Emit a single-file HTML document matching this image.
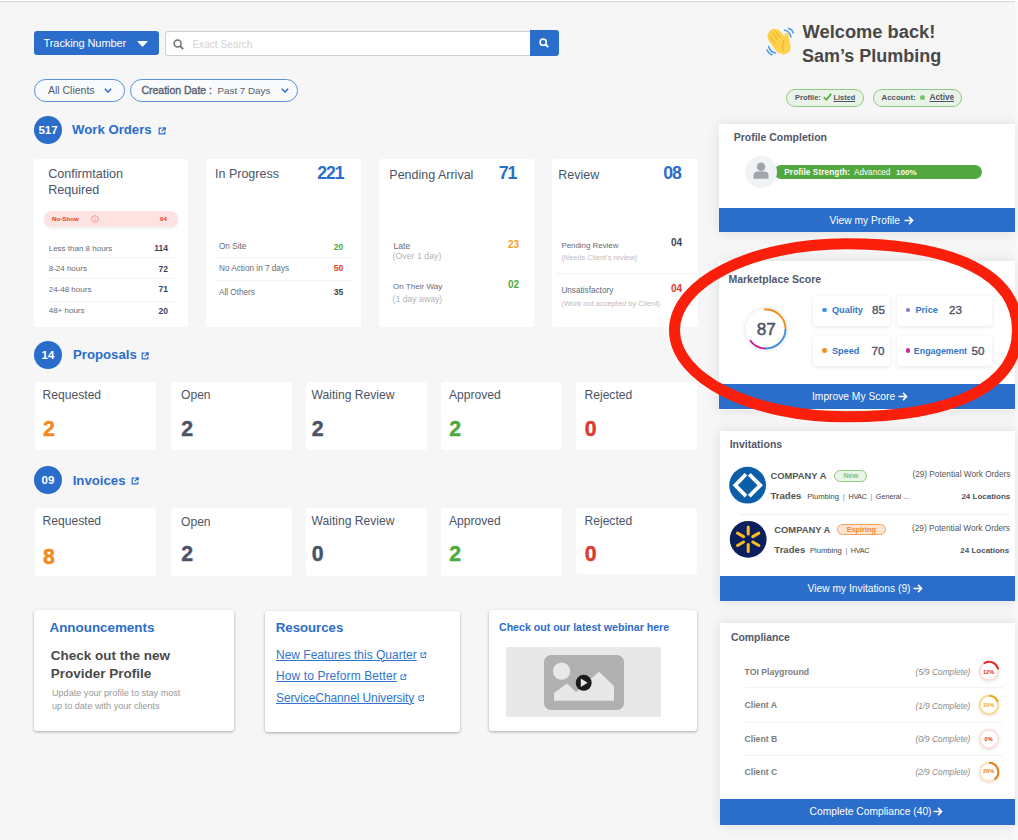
<!DOCTYPE html>
<html><head><meta charset="utf-8"><style>
html,body{margin:0;padding:0;}
body{width:1018px;height:840px;overflow:hidden;position:relative;background:#f6f6f6;font-family:"Liberation Sans",sans-serif;}
.t{position:absolute;line-height:1;white-space:nowrap;}
.r{position:absolute;}
</style></head><body>
<div class="r" style="left:0;top:0;width:1018px;height:1px;background:#fff"></div>
<div class="r" style="left:0;top:1px;width:1015px;height:1px;background:#d9d9d9"></div>
<div class="r" style="left:0;top:2px;width:1015px;height:1px;background:#f1f1f1"></div>
<div class="r" style="left:1015px;top:1px;width:3px;height:839px;background:#f9f9f9"></div>
<div class="r" style="left:34px;top:31px;width:125px;height:24px;background:#2b6dcb;border-radius:3px;"></div>
<div class="t" style="left:43.6px;top:37.89px;font-size:11px;color:#fff;font-weight:normal;letter-spacing:-0.1px;">Tracking Number</div>
<svg class="r" style="left:137px;top:41px" width="11" height="6" viewBox="0 0 11 6"><path d="M0 0H11L5.5 6Z" fill="#fff"/></svg>
<div class="r" style="left:164.5px;top:30.5px;width:366px;height:25px;background:#fff;border:1px solid #cfcfcf;border-right:none;border-radius:3px 0 0 3px;box-sizing:border-box;"></div>
<svg class="r" style="left:172.8px;top:38.8px" width="11" height="11" viewBox="0 0 11 11"><circle cx="4.6" cy="4.6" r="3.5" fill="none" stroke="#707070" stroke-width="1.5"/><path d="M7.2 7.2L10.2 10.2" stroke="#707070" stroke-width="1.8"/></svg>
<div class="t" style="left:192.4px;top:40.05px;font-size:10.1px;color:#d2d2d2;font-weight:normal;">Exact Search</div>
<div class="r" style="left:530px;top:30px;width:28.5px;height:25.5px;background:#2b6dcb;border-radius:0 3px 3px 0;"></div>
<svg class="r" style="left:539px;top:38px" width="10" height="10" viewBox="0 0 10 10"><circle cx="4.2" cy="4.2" r="3.1" fill="none" stroke="#fff" stroke-width="1.6"/><path d="M6.4 6.4L9.2 9.2" stroke="#fff" stroke-width="1.9"/></svg>
<div class="r" style="left:34px;top:79px;width:91px;height:22.5px;border:1px solid #5d8fd6;border-radius:12px;background:#f9fafc;box-sizing:border-box;"></div>
<div class="t" style="left:47.9px;top:85.11px;font-size:10.5px;color:#555e6e;font-weight:normal;">All Clients</div>
<svg class="r" style="left:104px;top:88px" width="8" height="5" viewBox="0 0 8 5"><path d="M0.8 0.8L4 4L7.2 0.8" fill="none" stroke="#2b6dcb" stroke-width="1.5"/></svg>
<div class="r" style="left:130px;top:79px;width:168px;height:22.5px;border:1px solid #5d8fd6;border-radius:12px;background:#f9fafc;box-sizing:border-box;"></div>
<div class="t" style="left:141.4px;top:85.31px;font-size:10.5px;color:#555e6e;font-weight:normal;-webkit-text-stroke:0.35px #555e6e;">Creation Date :</div>
<div class="t" style="left:217.5px;top:86.10px;font-size:9.8px;color:#555e6e;font-weight:normal;">Past 7 Days</div>
<svg class="r" style="left:281px;top:88px" width="8" height="5" viewBox="0 0 8 5"><path d="M0.8 0.8L4 4L7.2 0.8" fill="none" stroke="#2b6dcb" stroke-width="1.5"/></svg>
<div class="r" style="left:34px;top:116px;width:28px;height:28px;background:#2b6dcb;border-radius:50%;"></div>
<div class="t" style="left:34px;top:116px;width:28px;line-height:28px;text-align:center;font-size:11.5px;font-weight:bold;color:#fff">517</div>
<div class="t" style="left:72px;top:122.83px;font-size:13.2px;color:#2b6dcb;font-weight:bold;">Work Orders</div>
<svg class="r" style="left:158px;top:127px" width="8" height="8" viewBox="0 0 10 10"><path d="M4.5 1.5H1.5V8.5H8.5V5.5" fill="none" stroke="#2b6dcb" stroke-width="1.5"/><path d="M5.5 1H9V4.5M9 1L4.5 5.5" fill="none" stroke="#2b6dcb" stroke-width="1.5"/></svg>
<div class="r" style="left:34px;top:341px;width:28px;height:28px;background:#2b6dcb;border-radius:50%;"></div>
<div class="t" style="left:34px;top:341px;width:28px;line-height:28px;text-align:center;font-size:11.5px;font-weight:bold;color:#fff">14</div>
<div class="t" style="left:73px;top:348.43px;font-size:13.2px;color:#2b6dcb;font-weight:bold;">Proposals</div>
<svg class="r" style="left:141px;top:352px" width="8" height="8" viewBox="0 0 10 10"><path d="M4.5 1.5H1.5V8.5H8.5V5.5" fill="none" stroke="#2b6dcb" stroke-width="1.5"/><path d="M5.5 1H9V4.5M9 1L4.5 5.5" fill="none" stroke="#2b6dcb" stroke-width="1.5"/></svg>
<div class="r" style="left:34px;top:466px;width:28px;height:28px;background:#2b6dcb;border-radius:50%;"></div>
<div class="t" style="left:34px;top:466px;width:28px;line-height:28px;text-align:center;font-size:11.5px;font-weight:bold;color:#fff">09</div>
<div class="t" style="left:72.7px;top:473.83px;font-size:13.2px;color:#2b6dcb;font-weight:bold;">Invoices</div>
<svg class="r" style="left:131px;top:477px" width="8" height="8" viewBox="0 0 10 10"><path d="M4.5 1.5H1.5V8.5H8.5V5.5" fill="none" stroke="#2b6dcb" stroke-width="1.5"/><path d="M5.5 1H9V4.5M9 1L4.5 5.5" fill="none" stroke="#2b6dcb" stroke-width="1.5"/></svg>
<div class="r" style="left:34px;top:158.5px;width:154px;height:168.5px;background:#fff;border-radius:3px;"></div>
<div class="r" style="left:206px;top:158.5px;width:155px;height:168.5px;background:#fff;border-radius:3px;"></div>
<div class="r" style="left:379px;top:158.5px;width:155px;height:168.5px;background:#fff;border-radius:3px;"></div>
<div class="r" style="left:552px;top:158.5px;width:145.5px;height:168.5px;background:#fff;border-radius:3px;"></div>
<div class="t" style="left:48.2px;top:168.33px;font-size:12.6px;color:#4b5466;font-weight:normal;">Confirmtation</div>
<div class="t" style="left:48.2px;top:183.83px;font-size:12.6px;color:#4b5466;font-weight:normal;">Required</div>
<div class="r" style="left:44px;top:211px;width:134px;height:15.5px;background:#fde2e2;border-radius:8px;box-shadow:0 2px 3px rgba(0,0,0,0.06);"></div>
<div class="t" style="left:52px;top:216.25px;font-size:6.2px;color:#e2372c;font-weight:bold;">No-Show</div>
<svg class="r" style="left:91px;top:215px" width="8" height="8" viewBox="0 0 8 8"><circle cx="4" cy="4" r="3.3" fill="none" stroke="#f08a80" stroke-width="0.8"/><path d="M4 3.5V6M4 2V2.8" stroke="#f08a80" stroke-width="0.8"/></svg>
<div class="t" style="right:851px;top:216.25px;font-size:6.2px;color:#e2372c;font-weight:bold;">04</div>
<div class="t" style="left:48.7px;top:244.53px;font-size:8.0px;color:#646b78;font-weight:normal;">Less than 8 hours</div>
<div class="t" style="right:850px;top:244.02px;font-size:8.6px;color:#3d4558;font-weight:bold;">114</div>
<div class="t" style="left:48.7px;top:265.03px;font-size:8.0px;color:#646b78;font-weight:normal;">8-24 hours</div>
<div class="t" style="right:850px;top:264.52px;font-size:8.6px;color:#3d4558;font-weight:bold;">72</div>
<div class="t" style="left:48.7px;top:285.83px;font-size:8.0px;color:#646b78;font-weight:normal;">24-48 hours</div>
<div class="t" style="right:850px;top:285.32px;font-size:8.6px;color:#3d4558;font-weight:bold;">71</div>
<div class="t" style="left:48.7px;top:307.33px;font-size:8.0px;color:#646b78;font-weight:normal;">48+ hours</div>
<div class="t" style="right:850px;top:306.82px;font-size:8.6px;color:#3d4558;font-weight:bold;">20</div>
<div class="r" style="left:48px;top:257px;width:127px;height:1px;background:#f3f3f3;"></div>
<div class="r" style="left:48px;top:278px;width:127px;height:1px;background:#f3f3f3;"></div>
<div class="r" style="left:48px;top:300.5px;width:127px;height:1px;background:#f3f3f3;"></div>
<div class="t" style="left:215px;top:167.82px;font-size:12.5px;color:#4b5466;font-weight:normal;">In Progress</div>
<div class="t" style="right:674.6px;top:164.82px;font-size:17.7px;color:#2b6dcb;font-weight:bold;letter-spacing:-1.1px;">221</div>
<div class="t" style="left:219px;top:242.66px;font-size:8.2px;color:#646b78;font-weight:normal;">On Site</div>
<div class="t" style="right:674.8px;top:243.12px;font-size:8.6px;color:#4ea93b;font-weight:bold;">20</div>
<div class="t" style="left:219px;top:265.06px;font-size:8.2px;color:#646b78;font-weight:normal;">No Action in 7 days</div>
<div class="t" style="right:674.8px;top:264.32px;font-size:8.6px;color:#e2372c;font-weight:bold;">50</div>
<div class="t" style="left:219px;top:289.06px;font-size:8.2px;color:#646b78;font-weight:normal;">All Others</div>
<div class="t" style="right:674.8px;top:288.32px;font-size:8.6px;color:#3d4558;font-weight:bold;">35</div>
<div class="r" style="left:214px;top:257px;width:139px;height:1px;background:#f3f3f3;"></div>
<div class="r" style="left:214px;top:279.5px;width:139px;height:1px;background:#f3f3f3;"></div>
<div class="t" style="left:389.3px;top:169.02px;font-size:12.5px;color:#4b5466;font-weight:normal;">Pending Arrival</div>
<div class="t" style="right:501.79999999999995px;top:164.82px;font-size:17.7px;color:#2b6dcb;font-weight:bold;letter-spacing:-1.1px;">71</div>
<div class="t" style="left:393.6px;top:241.80px;font-size:8.5px;color:#646b78;font-weight:normal;">Late</div>
<div class="t" style="left:392.5px;top:252.35px;font-size:8.8px;color:#b5b5b5;font-weight:normal;">(Over 1 day)</div>
<div class="t" style="right:499px;top:239.53px;font-size:10px;color:#f2a021;font-weight:bold;">23</div>
<div class="t" style="left:392.9px;top:282.64px;font-size:8.1px;color:#646b78;font-weight:normal;">On Their Way</div>
<div class="t" style="left:392.5px;top:294.64px;font-size:8.7px;color:#b5b5b5;font-weight:normal;">(1 day away)</div>
<div class="t" style="right:499px;top:279.54px;font-size:10px;color:#4ea93b;font-weight:bold;">02</div>
<div class="t" style="left:558.2px;top:169.02px;font-size:12.5px;color:#4b5466;font-weight:normal;">Review</div>
<div class="t" style="right:337.20000000000005px;top:164.82px;font-size:17.7px;color:#2b6dcb;font-weight:bold;letter-spacing:-1.1px;">08</div>
<div class="t" style="left:561.4px;top:241.81px;font-size:7.9px;color:#646b78;font-weight:normal;">Pending Review</div>
<div class="t" style="left:561.4px;top:254.24px;font-size:7.4px;color:#bdbdbd;font-weight:normal;">(Needs Client’s review)</div>
<div class="t" style="right:336px;top:238.23px;font-size:10px;color:#3d4558;font-weight:bold;">04</div>
<div class="r" style="left:555px;top:273px;width:139px;height:1px;background:#f3f3f3;"></div>
<div class="t" style="left:561.4px;top:286.86px;font-size:8.2px;color:#646b78;font-weight:normal;">Unsatisfactory</div>
<div class="t" style="left:561.4px;top:299.65px;font-size:7.5px;color:#bdbdbd;font-weight:normal;">(Work not accepted by Client)</div>
<div class="t" style="right:336px;top:283.84px;font-size:10px;color:#e2372c;font-weight:bold;">04</div>
<div class="r" style="left:35px;top:382px;width:121px;height:68px;background:#fff;border-radius:3px;"></div>
<div class="t" style="left:42.6px;top:389.26px;font-size:12.1px;color:#4b5466;font-weight:normal;">Requested</div>
<div class="t" style="left:42.9px;top:418.97px;font-size:21.3px;color:#f08a1c;font-weight:bold;-webkit-text-stroke:0.45px #f08a1c;">2</div>
<div class="r" style="left:171px;top:382px;width:121px;height:68px;background:#fff;border-radius:3px;"></div>
<div class="t" style="left:181px;top:389.26px;font-size:12.1px;color:#4b5466;font-weight:normal;">Open</div>
<div class="t" style="left:181.3px;top:418.97px;font-size:21.3px;color:#4b5466;font-weight:bold;-webkit-text-stroke:0.45px #4b5466;">2</div>
<div class="r" style="left:306px;top:382px;width:121px;height:68px;background:#fff;border-radius:3px;"></div>
<div class="t" style="left:311.5px;top:389.26px;font-size:12.1px;color:#4b5466;font-weight:normal;">Waiting Review</div>
<div class="t" style="left:311.8px;top:418.97px;font-size:21.3px;color:#4b5466;font-weight:bold;-webkit-text-stroke:0.45px #4b5466;">2</div>
<div class="r" style="left:441px;top:382px;width:121px;height:68px;background:#fff;border-radius:3px;"></div>
<div class="t" style="left:449px;top:389.26px;font-size:12.1px;color:#4b5466;font-weight:normal;">Approved</div>
<div class="t" style="left:449.3px;top:418.97px;font-size:21.3px;color:#4ea93b;font-weight:bold;-webkit-text-stroke:0.45px #4ea93b;">2</div>
<div class="r" style="left:576px;top:382px;width:121px;height:68px;background:#fff;border-radius:3px;"></div>
<div class="t" style="left:584.5px;top:389.26px;font-size:12.1px;color:#4b5466;font-weight:normal;">Rejected</div>
<div class="t" style="left:584.8px;top:418.97px;font-size:21.3px;color:#dd3b2f;font-weight:bold;-webkit-text-stroke:0.45px #dd3b2f;">0</div>
<div class="r" style="left:35px;top:508px;width:121px;height:68px;background:#fff;border-radius:3px;"></div>
<div class="t" style="left:42.6px;top:515.16px;font-size:12.1px;color:#4b5466;font-weight:normal;">Requested</div>
<div class="t" style="left:42.9px;top:546.97px;font-size:21.3px;color:#f08a1c;font-weight:bold;-webkit-text-stroke:0.45px #f08a1c;">8</div>
<div class="r" style="left:171px;top:508px;width:121px;height:68px;background:#fff;border-radius:3px;"></div>
<div class="t" style="left:181px;top:516.16px;font-size:12.1px;color:#4b5466;font-weight:normal;">Open</div>
<div class="t" style="left:181.3px;top:544.47px;font-size:21.3px;color:#4b5466;font-weight:bold;-webkit-text-stroke:0.45px #4b5466;">2</div>
<div class="r" style="left:306px;top:508px;width:121px;height:68px;background:#fff;border-radius:3px;"></div>
<div class="t" style="left:311.5px;top:515.16px;font-size:12.1px;color:#4b5466;font-weight:normal;">Waiting Review</div>
<div class="t" style="left:311.8px;top:544.47px;font-size:21.3px;color:#4b5466;font-weight:bold;-webkit-text-stroke:0.45px #4b5466;">0</div>
<div class="r" style="left:441px;top:508px;width:121px;height:68px;background:#fff;border-radius:3px;"></div>
<div class="t" style="left:449px;top:515.16px;font-size:12.1px;color:#4b5466;font-weight:normal;">Approved</div>
<div class="t" style="left:449.3px;top:544.47px;font-size:21.3px;color:#4ea93b;font-weight:bold;-webkit-text-stroke:0.45px #4ea93b;">2</div>
<div class="r" style="left:576px;top:508px;width:121px;height:66px;background:#fff;border-radius:3px;"></div>
<div class="t" style="left:584.5px;top:515.16px;font-size:12.1px;color:#4b5466;font-weight:normal;">Rejected</div>
<div class="t" style="left:584.8px;top:544.47px;font-size:21.3px;color:#dd3b2f;font-weight:bold;-webkit-text-stroke:0.45px #dd3b2f;">0</div>
<div class="r" style="left:34px;top:610px;width:200px;height:120.5px;background:#fff;border-radius:3px;box-shadow:0 1px 3px rgba(0,0,0,0.32);"></div>
<div class="r" style="left:265px;top:611px;width:195px;height:120.5px;background:#fff;border-radius:3px;box-shadow:0 1px 3px rgba(0,0,0,0.32);"></div>
<div class="r" style="left:489px;top:610px;width:208px;height:120.5px;background:#fff;border-radius:3px;box-shadow:0 1px 3px rgba(0,0,0,0.32);"></div>
<div class="t" style="left:49.5px;top:620.66px;font-size:13.4px;color:#2b6dcb;font-weight:bold;">Announcements</div>
<div class="t" style="left:50.7px;top:648.97px;font-size:13.5px;color:#4a4a4a;font-weight:bold;">Check out the new</div>
<div class="t" style="left:50.7px;top:666.57px;font-size:13.5px;color:#4a4a4a;font-weight:bold;">Provider Profile</div>
<div class="t" style="left:52px;top:689.10px;font-size:9.1px;color:#999;font-weight:normal;">Update your profile to stay most</div>
<div class="t" style="left:52px;top:701.80px;font-size:9.1px;color:#999;font-weight:normal;">up to date with your clients</div>
<div class="t" style="left:275.8px;top:620.83px;font-size:13.2px;color:#2b6dcb;font-weight:bold;">Resources</div>
<div class="t" style="left:276px;top:648.84px;font-size:12px;color:#3174d0;font-weight:normal;text-decoration:underline;text-decoration-thickness:1px;text-underline-offset:1px;letter-spacing:0px;">New Features this Quarter</div>
<svg class="r" style="left:420px;top:652px" width="6.5" height="6.5" viewBox="0 0 10 10"><path d="M4.5 1.5H1.5V8.5H8.5V5.5" fill="none" stroke="#3174d0" stroke-width="1.5"/><path d="M5.5 1H9V4.5M9 1L4.5 5.5" fill="none" stroke="#3174d0" stroke-width="1.5"/></svg>
<div class="t" style="left:276px;top:670.34px;font-size:12px;color:#3174d0;font-weight:normal;text-decoration:underline;text-decoration-thickness:1px;text-underline-offset:1px;letter-spacing:0.1px;">How to Preform Better</div>
<svg class="r" style="left:400.3px;top:673.5px" width="6.5" height="6.5" viewBox="0 0 10 10"><path d="M4.5 1.5H1.5V8.5H8.5V5.5" fill="none" stroke="#3174d0" stroke-width="1.5"/><path d="M5.5 1H9V4.5M9 1L4.5 5.5" fill="none" stroke="#3174d0" stroke-width="1.5"/></svg>
<div class="t" style="left:276px;top:691.84px;font-size:12px;color:#3174d0;font-weight:normal;text-decoration:underline;text-decoration-thickness:1px;text-underline-offset:1px;letter-spacing:-0.1px;">ServiceChannel University</div>
<svg class="r" style="left:417.5px;top:695px" width="6.5" height="6.5" viewBox="0 0 10 10"><path d="M4.5 1.5H1.5V8.5H8.5V5.5" fill="none" stroke="#3174d0" stroke-width="1.5"/><path d="M5.5 1H9V4.5M9 1L4.5 5.5" fill="none" stroke="#3174d0" stroke-width="1.5"/></svg>
<div class="t" style="left:499px;top:621.73px;font-size:10.6px;color:#2b6dcb;font-weight:bold;">Check out our latest webinar here</div>
<div class="r" style="left:506px;top:646.7px;width:155px;height:70.3px;background:#e8e8e8;border-radius:2px;"></div>
<svg class="r" style="left:544px;top:655px" width="80" height="55" viewBox="0 0 80 55"><rect x="0" y="0" width="80" height="55" rx="7" fill="#b0b0b0"/><circle cx="17.6" cy="16.2" r="8.6" fill="#e8e8e8"/><path d="M10 45.7V38L23 28.5L32 37L55 16.7L70 31V45.7Z" fill="#e8e8e8"/><circle cx="39.7" cy="27.8" r="8" fill="#1c1c1c"/><path d="M36.8 23.6V32L43.6 27.8Z" fill="#e8e8e8"/></svg>
<div class="t" style="left:802.6px;top:22.61px;font-size:18.3px;color:#484848;font-weight:bold;">Welcome back!</div>
<div class="t" style="left:802px;top:46.66px;font-size:18px;color:#484848;font-weight:bold;">Sam’s Plumbing</div>
<svg class="r" style="left:760px;top:22px" width="40" height="38" viewBox="0 0 40 38">
<g fill="#fdd24a">
<g transform="rotate(-36 19 20)"><rect x="11.5" y="5.5" width="15" height="27" rx="7.5"/></g>
<path d="M22.5 24 L24.5 13 C25 10 28.5 10.5 28.5 13.5 L30.5 24 C31.5 29 27 33 22 32.5Z"/>
</g>
<g stroke="#e79a1c" stroke-width="0.8" fill="none">
<path d="M10.5 14.5 L15 21.5 M12.5 11 L17.5 17.5 M15.5 9.5 L20.5 15.5"/>
<path d="M24 18.5 C22.5 21 22 24 23.5 28.5"/>
</g>
<g stroke="#4a98e4" stroke-width="1.5" fill="none" stroke-linecap="round">
<path d="M24.5 8.3 C27.5 8.7 30 11.5 31 15"/>
<path d="M28.5 6.5 C31 7 32.8 9 33 11"/>
<path d="M8.6 24.5 C9.5 28 12 30.5 15.5 31"/>
<path d="M7 27.8 C8 30.3 10 32.3 12 32.8"/>
</g>
</svg>
<div class="r" style="left:786px;top:88.5px;width:78px;height:18px;background:#eaf3e8;border:1px solid #8ccc80;border-radius:10px;box-sizing:border-box;"></div>
<div class="t" style="left:795px;top:94.15px;font-size:7.5px;color:#4f5566;font-weight:bold;">Profile:</div>
<svg class="r" style="left:823px;top:93px" width="9" height="8" viewBox="0 0 9 8"><path d="M0.8 4.2L3.3 6.8L8.3 0.8" fill="none" stroke="#4aa83a" stroke-width="1.6"/></svg>
<div class="t" style="left:833.5px;top:94.24px;font-size:7.4px;color:#4f5566;font-weight:bold;text-decoration:underline;">Listed</div>
<div class="r" style="left:873px;top:88.5px;width:89px;height:18px;background:#eaf3e8;border:1px solid #8ccc80;border-radius:10px;box-sizing:border-box;"></div>
<div class="t" style="left:881.5px;top:93.81px;font-size:7.9px;color:#4f5566;font-weight:bold;">Account:</div>
<div class="r" style="left:919.6px;top:94.8px;width:5.4px;height:5.4px;background:#7cc46c;border-radius:50%;"></div>
<div class="t" style="left:929.5px;top:93.56px;font-size:8.2px;color:#4f5566;font-weight:bold;text-decoration:underline;">Active</div>
<div class="r" style="left:719px;top:123.5px;width:296px;height:108.5px;background:#fff;box-shadow:0 0 12px rgba(0,0,0,0.10);"></div>
<div class="t" style="left:733.7px;top:132.11px;font-size:10.5px;color:#525868;font-weight:bold;">Profile Completion</div>
<div class="r" style="left:774px;top:165px;width:208px;height:14px;background:#52a83e;border-radius:7px;"></div>
<div class="r" style="left:745px;top:155.5px;width:31.5px;height:32.5px;background:#f1f2f5;border-radius:50%;"></div>
<svg class="r" style="left:753px;top:162px" width="16" height="17" viewBox="0 0 16 17"><circle cx="8" cy="4.7" r="4.3" fill="#a0a4ad"/><path d="M0.5 16.7V13.2C0.5 10.6 2.5 9.6 4.5 9.6H11.5C13.5 9.6 15.5 10.6 15.5 13.2V16.7Z" fill="#a0a4ad"/></svg>
<div class="t" style="left:784.3px;top:169.26px;font-size:8.2px;color:#fff;font-weight:bold;letter-spacing:0.1px;">Profile Strength:</div>
<div class="t" style="left:854px;top:169.26px;font-size:8.2px;color:#fff;font-weight:normal;">Advanced</div>
<div class="t" style="left:896px;top:169.34px;font-size:8.1px;color:#fff;font-weight:bold;">100%</div>
<div class="r" style="left:719px;top:208px;width:296px;height:23.5px;background:#2b6dcb;"></div>
<div class="t" style="left:829.6px;top:215.72px;font-size:10.25px;color:#fff;font-weight:normal;">View my Profile</div>
<svg class="r" style="left:904px;top:215.80px" width="10" height="9" viewBox="0 0 10 9"><path d="M0.5 4.5H8.6M5 0.9L8.6 4.5L5 8.1" fill="none" stroke="#fff" stroke-width="1.5"/></svg>
<div class="r" style="left:719px;top:261px;width:296px;height:148.5px;background:#fff;box-shadow:0 0 12px rgba(0,0,0,0.10);"></div>
<div class="t" style="left:728.4px;top:274.41px;font-size:10.5px;color:#525868;font-weight:bold;">Marketplace Score</div>
<svg class="r" style="left:742.2px;top:305.4px" width="48" height="48" viewBox="-24 -24 48 48">
<circle r="20.5" fill="#fff" style="filter:drop-shadow(0 0 2px rgba(0,0,0,0.13))"/>
<path d="M-1.70 -19.43 A19.5 19.5 0 0 1 19.50 -0.00" fill="none" stroke="#f08c1c" stroke-width="1.9"/>
<path d="M19.50 -0.00 A19.5 19.5 0 0 1 0.00 19.50" fill="none" stroke="#4190e0" stroke-width="1.9"/>
<path d="M0.00 19.50 A19.5 19.5 0 0 1 -15.97 11.18" fill="none" stroke="#c4179f" stroke-width="1.9"/>
</svg>
<div class="t" style="left:766.2px;transform:translateX(-50%);top:321.04px;font-size:17.2px;color:#4b5466;font-weight:normal;-webkit-text-stroke:0.5px #4b5466;">87</div>
<div class="r" style="left:812.6px;top:296px;width:77.4px;height:30px;background:#fff;border-radius:3px;box-shadow:0 1px 4px rgba(0,0,0,0.10);"></div>
<div class="r" style="left:897px;top:296px;width:95px;height:30px;background:#fff;border-radius:3px;box-shadow:0 1px 4px rgba(0,0,0,0.10);"></div>
<div class="r" style="left:812.6px;top:336px;width:77.4px;height:30px;background:#fff;border-radius:3px;box-shadow:0 1px 4px rgba(0,0,0,0.10);"></div>
<div class="r" style="left:897px;top:336px;width:95px;height:30px;background:#fff;border-radius:3px;box-shadow:0 1px 4px rgba(0,0,0,0.10);"></div>
<div class="r" style="left:822.3px;top:307.9px;width:4.6px;height:4.6px;background:#4a90e2;border-radius:50%;"></div>
<div class="t" style="left:832.0px;top:306.00px;font-size:9.1px;color:#2f75c8;font-weight:bold;">Quality</div>
<div class="t" style="right:133px;top:304.48px;font-size:11.6px;color:#4b5466;font-weight:normal;-webkit-text-stroke:0.35px #4b5466;">85</div>
<div class="r" style="left:905.8px;top:307.9px;width:4.6px;height:4.6px;background:#8e6fd8;border-radius:50%;"></div>
<div class="t" style="left:915.5px;top:306.00px;font-size:9.1px;color:#2f75c8;font-weight:bold;">Price</div>
<div class="t" style="right:56px;top:304.48px;font-size:11.6px;color:#4b5466;font-weight:normal;-webkit-text-stroke:0.35px #4b5466;">23</div>
<div class="r" style="left:822.3px;top:348.4px;width:4.6px;height:4.6px;background:#f0902a;border-radius:50%;"></div>
<div class="t" style="left:832.0px;top:346.50px;font-size:9.1px;color:#2f75c8;font-weight:bold;">Speed</div>
<div class="t" style="right:133.5px;top:344.98px;font-size:11.6px;color:#4b5466;font-weight:normal;-webkit-text-stroke:0.35px #4b5466;">70</div>
<div class="r" style="left:905.8px;top:348.4px;width:4.6px;height:4.6px;background:#c628a8;border-radius:50%;"></div>
<div class="t" style="left:913.8px;top:346.67px;font-size:8.9px;color:#2f75c8;font-weight:bold;">Engagement</div>
<div class="t" style="right:33.5px;top:344.98px;font-size:11.6px;color:#4b5466;font-weight:normal;-webkit-text-stroke:0.35px #4b5466;">50</div>
<div class="r" style="left:719px;top:383.5px;width:296px;height:25.5px;background:#2b6dcb;"></div>
<div class="t" style="left:812px;top:391.72px;font-size:10.25px;color:#fff;font-weight:normal;">Improve My Score</div>
<svg class="r" style="left:898px;top:391.80px" width="10" height="9" viewBox="0 0 10 9"><path d="M0.5 4.5H8.6M5 0.9L8.6 4.5L5 8.1" fill="none" stroke="#fff" stroke-width="1.5"/></svg>
<div class="r" style="left:720px;top:431px;width:295px;height:169.6px;background:#fff;box-shadow:0 0 12px rgba(0,0,0,0.10);"></div>
<div class="t" style="left:729.7px;top:438.91px;font-size:10.5px;color:#525868;font-weight:bold;">Invitations</div>
<svg class="r" style="left:0;top:0" width="1018" height="840"><circle cx="747.6" cy="485.2" r="18.4" fill="#0a5fa8"/><path d="M746 474.3 L735.3 485.3 L746 496.2 M749.3 474.3 L760.3 485.3 L749.3 496.2" fill="none" stroke="#fff" stroke-width="3.8" stroke-linejoin="miter"/></svg>
<svg class="r" style="left:0;top:0" width="1018" height="840"><circle cx="748.2" cy="539.3" r="18.4" fill="#0b1f5f"/><g stroke="#fbbd1d" stroke-width="3" stroke-linecap="round"><path d="M748.2 527V534M748.2 544.6V551.6"/><path d="M748.2 527V534M748.2 544.6V551.6" transform="rotate(60 748.2 539.3)"/><path d="M748.2 527V534M748.2 544.6V551.6" transform="rotate(-60 748.2 539.3)"/></g></svg>
<div class="t" style="left:770.4px;top:471.34px;font-size:9.4px;color:#555;font-weight:bold;">COMPANY A</div>
<div class="r" style="left:834.3px;top:470px;width:33px;height:11.5px;background:#eaf5e7;border:1px solid #8fcf84;border-radius:6px;box-sizing:border-box;"></div>
<div class="t" style="left:851px;transform:translateX(-50%);top:472.32px;font-size:7.3px;color:#80c474;font-weight:bold;">New</div>
<div class="t" style="left:912.4px;top:471.32px;font-size:8.25px;color:#555;font-weight:normal;">(29) Potential Work Orders</div>
<div class="t" style="left:770.4px;top:491.07px;font-size:9.6px;color:#555;font-weight:bold;">Trades</div>
<div class="t" style="left:807.3px;top:492.77px;font-size:7.6px;color:#444;font-weight:normal;">Plumbing</div>
<div class="t" style="left:842.8px;top:493.17px;font-size:7.6px;color:#888;font-weight:normal;">|</div>
<div class="t" style="left:848.5px;top:493.11px;font-size:7.2px;color:#444;font-weight:normal;letter-spacing:-0.3px;">HVAC</div>
<div class="t" style="left:870.6px;top:493.17px;font-size:7.6px;color:#888;font-weight:normal;">|</div>
<div class="t" style="left:875.8px;top:493.11px;font-size:7.2px;color:#444;font-weight:normal;">General ...</div>
<div class="t" style="right:7.7000000000000455px;top:492.83px;font-size:8px;color:#4b5466;font-weight:bold;">24 Locations</div>
<div class="r" style="left:740px;top:514px;width:269px;height:1px;background:#f0f0f0;"></div>
<div class="t" style="left:774.3px;top:525.04px;font-size:9.4px;color:#555;font-weight:bold;">COMPANY A</div>
<div class="r" style="left:837px;top:524px;width:48.5px;height:11px;background:#fde3d0;border:1px solid #f5a25e;border-radius:6px;box-sizing:border-box;"></div>
<div class="t" style="left:861.3px;transform:translateX(-50%);top:526.12px;font-size:7.3px;color:#f08a2c;font-weight:bold;">Expiring</div>
<div class="t" style="left:912px;top:525.32px;font-size:8.25px;color:#555;font-weight:normal;">(29) Potential Work Orders</div>
<div class="t" style="left:774.3px;top:545.37px;font-size:9.6px;color:#555;font-weight:bold;">Trades</div>
<div class="t" style="left:810px;top:547.07px;font-size:7.6px;color:#444;font-weight:normal;">Plumbing</div>
<div class="t" style="left:845.5px;top:547.47px;font-size:7.6px;color:#888;font-weight:normal;">|</div>
<div class="t" style="left:850.8px;top:547.41px;font-size:7.2px;color:#444;font-weight:normal;letter-spacing:-0.3px;">HVAC</div>
<div class="t" style="right:8.799999999999955px;top:546.63px;font-size:8px;color:#4b5466;font-weight:bold;">24 Locations</div>
<div class="r" style="left:720px;top:576px;width:295px;height:24.6px;background:#2b6dcb;"></div>
<div class="t" style="left:807.6px;top:584.12px;font-size:10.25px;color:#fff;font-weight:normal;">View my Invitations (9)</div>
<svg class="r" style="left:913px;top:584.20px" width="10" height="9" viewBox="0 0 10 9"><path d="M0.5 4.5H8.6M5 0.9L8.6 4.5L5 8.1" fill="none" stroke="#fff" stroke-width="1.5"/></svg>
<div class="r" style="left:720px;top:622.5px;width:295px;height:202.3px;background:#fff;box-shadow:0 0 12px rgba(0,0,0,0.10);"></div>
<div class="t" style="left:731px;top:633.20px;font-size:10.4px;color:#525868;font-weight:bold;">Compliance</div>
<div class="t" style="left:744.5px;top:667.84px;font-size:8.7px;color:#7d7d7d;font-weight:bold;">TOI Playground</div>
<div class="t" style="right:47.700000000000045px;top:668.17px;font-size:8.3px;color:#8a8a8a;font-weight:normal;font-style:italic;">(5/9 Complete)</div>
<svg class="r" style="left:975.6px;top:658.2px" width="26" height="26" viewBox="-13 -13 26 26"><circle r="10" fill="#fff" style="filter:drop-shadow(0 1.5px 1.5px rgba(0,0,0,0.13))"/><circle r="9.2" fill="none" stroke="#fde0de" stroke-width="2"/><path d="M-5.28 -7.54 A9.2 9.2 0 0 1 9.07 -1.57" fill="none" stroke="#d8322a" stroke-width="2"/></svg>
<div class="t" style="left:988.6px;transform:translateX(-50%);top:669.56px;font-size:5.6px;color:#d8322a;font-weight:bold;">12%</div>
<div class="t" style="left:744.5px;top:701.34px;font-size:8.7px;color:#7d7d7d;font-weight:bold;">Client A</div>
<div class="t" style="right:47.700000000000045px;top:701.67px;font-size:8.3px;color:#8a8a8a;font-weight:normal;font-style:italic;">(1/9 Complete)</div>
<svg class="r" style="left:975.6px;top:691.7px" width="26" height="26" viewBox="-13 -13 26 26"><circle r="10" fill="#fff" style="filter:drop-shadow(0 1.5px 1.5px rgba(0,0,0,0.13))"/><circle r="9.2" fill="none" stroke="#fbd98f" stroke-width="2"/><path d="M0.00 -9.20 A9.2 9.2 0 0 1 8.75 -2.84" fill="none" stroke="#f0a820" stroke-width="2"/></svg>
<div class="t" style="left:988.6px;transform:translateX(-50%);top:703.06px;font-size:5.6px;color:#f0a820;font-weight:bold;">10%</div>
<div class="t" style="left:744.5px;top:734.84px;font-size:8.7px;color:#7d7d7d;font-weight:bold;">Client B</div>
<div class="t" style="right:47.700000000000045px;top:735.17px;font-size:8.3px;color:#8a8a8a;font-weight:normal;font-style:italic;">(0/9 Complete)</div>
<svg class="r" style="left:975.6px;top:725.7px" width="26" height="26" viewBox="-13 -13 26 26"><circle r="10" fill="#fff" style="filter:drop-shadow(0 1.5px 1.5px rgba(0,0,0,0.13))"/><circle r="9.2" fill="none" stroke="#fde0de" stroke-width="2"/></svg>
<div class="t" style="left:988.6px;transform:translateX(-50%);top:736.56px;font-size:5.6px;color:#d8322a;font-weight:bold;">0%</div>
<div class="t" style="left:744.5px;top:767.74px;font-size:8.7px;color:#7d7d7d;font-weight:bold;">Client C</div>
<div class="t" style="right:47.700000000000045px;top:768.07px;font-size:8.3px;color:#8a8a8a;font-weight:normal;font-style:italic;">(2/9 Complete)</div>
<svg class="r" style="left:975.6px;top:758.7px" width="26" height="26" viewBox="-13 -13 26 26"><circle r="10" fill="#fff" style="filter:drop-shadow(0 1.5px 1.5px rgba(0,0,0,0.13))"/><circle r="9.2" fill="none" stroke="#fde3c8" stroke-width="2"/><path d="M0.00 -9.20 A9.2 9.2 0 0 1 5.41 7.44" fill="none" stroke="#e5800e" stroke-width="2"/></svg>
<div class="t" style="left:988.6px;transform:translateX(-50%);top:769.46px;font-size:5.6px;color:#e5800e;font-weight:bold;">20%</div>
<div class="r" style="left:744.5px;top:686.5px;width:258px;height:1px;background:#f3f3f3;"></div>
<div class="r" style="left:744.5px;top:722px;width:258px;height:1px;background:#f3f3f3;"></div>
<div class="r" style="left:744.5px;top:755px;width:258px;height:1px;background:#f3f3f3;"></div>
<div class="r" style="left:720px;top:799.3px;width:295px;height:25.3px;background:#2b6dcb;"></div>
<div class="t" style="left:809.6px;top:807.22px;font-size:10.25px;color:#fff;font-weight:normal;">Complete Compliance (40)</div>
<svg class="r" style="left:933px;top:807.30px" width="10" height="9" viewBox="0 0 10 9"><path d="M0.5 4.5H8.6M5 0.9L8.6 4.5L5 8.1" fill="none" stroke="#fff" stroke-width="1.5"/></svg>
<svg class="r" style="left:0;top:0;z-index:10" width="1018" height="840"><path d="M1017.5 330.3 C1017.5 385.66 955.76 416.8 846 416.8 C751.28055 416.8 674.5 378.07395 674.5 330.3 C674.5 282.52605 751.28055 243.8 846 243.8 C955.76 243.8 1017.5 274.94 1017.5 330.3Z" fill="none" stroke="#f91f0b" stroke-width="11"/></svg>
</body></html>
